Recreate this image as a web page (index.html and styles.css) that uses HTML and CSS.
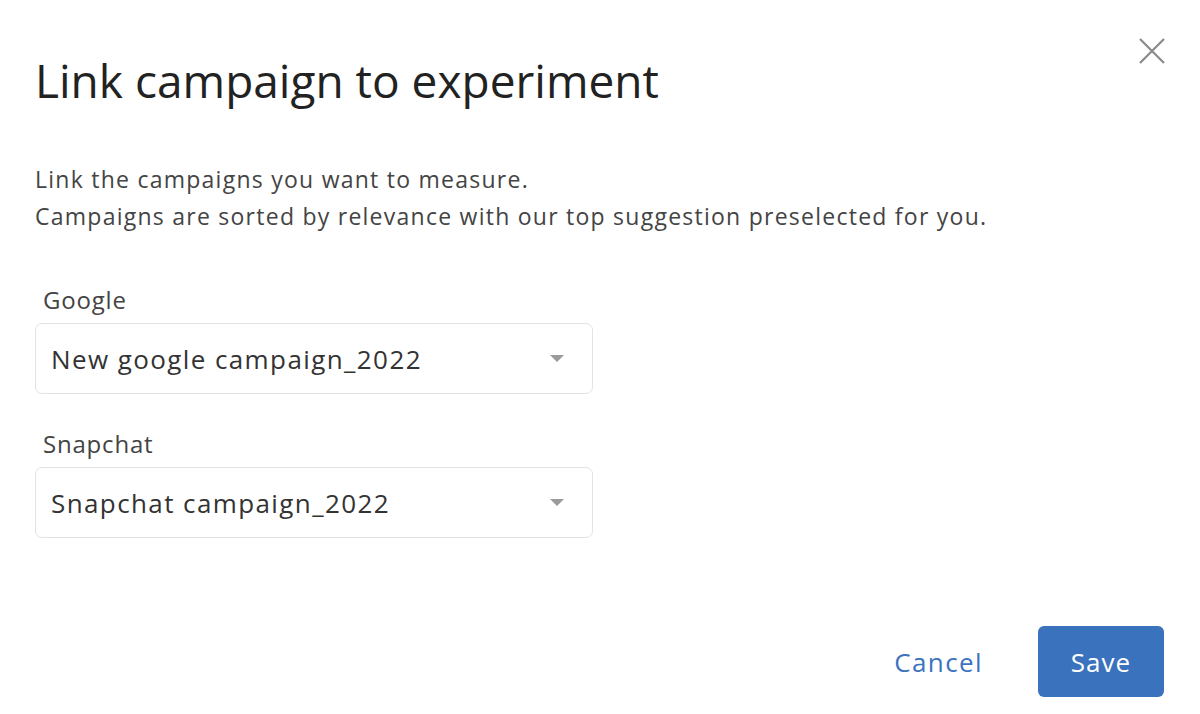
FILE: index.html
```html
<!DOCTYPE html>
<html lang="en">
<head>
<meta charset="utf-8">
<title>Link campaign to experiment</title>
<link rel="stylesheet" href="styles.css">
</head>
<body>
<div class="modal">
  <button class="close" aria-label="Close">
    <svg width="26" height="26" viewBox="0 0 26 26"><path d="M1 1 L25 25 M25 1 L1 25" stroke="#8a8a8a" stroke-width="2.2" fill="none"/></svg>
  </button>
  <h1 class="title">Link campaign to experiment</h1>
  <div class="desc">
    <p>Link the campaigns you want to measure.</p>
    <p>Campaigns are sorted by relevance with our top suggestion preselected for you.</p>
  </div>
  <div class="field">
    <label class="label">Google</label>
    <div class="select">
      <span class="value">New google campaign_2022</span>
      <span class="caret"></span>
    </div>
  </div>
  <div class="field">
    <label class="label">Snapchat</label>
    <div class="select">
      <span class="value">Snapchat campaign_2022</span>
      <span class="caret"></span>
    </div>
  </div>
  <div class="actions">
    <button class="cancel">Cancel</button>
    <button class="save">Save</button>
  </div>
</div>
</body>
</html>
```
FILE: styles.css
```css
* { box-sizing: border-box; }
html, body { margin: 0; padding: 0; background: #fff; }
body {
  font-family: "Open Sans", Lato, Arial, sans-serif;
  color: #2b2b2b;
  width: 1200px;
  height: 714px;
  overflow: hidden;
}
.modal {
  position: relative;
  padding: 50px 36px 0 35px;
  height: 714px;
}
.close {
  position: absolute;
  top: 38px;
  right: 35px;
  width: 26px;
  height: 26px;
  padding: 0;
  border: 0;
  background: none;
  display: block;
}
.close svg { display: block; }
.title {
  margin: 0;
  font-size: 46px;
  font-weight: 400;
  line-height: 60px;
  color: #222;
}
.desc {
  margin-top: 51px;
  font-size: 23px;
  line-height: 37px;
  letter-spacing: 1.25px;
  color: #444;
}
.desc p { margin: 0; }
.field { margin-top: 50px; width: 558px; }
.field + .field { margin-top: 35px; }
.label {
  display: block;
  margin-left: 8px;
  font-size: 24px;
  line-height: 30px;
  letter-spacing: 0.8px;
  color: #444;
  margin-bottom: 8px;
}
.select {
  height: 71px;
  border: 1.5px solid #e3e3e3;
  border-radius: 7px;
  display: flex;
  align-items: center;
  justify-content: space-between;
  padding: 0 28px 0 15px;
}
.value {
  font-size: 26px;
  letter-spacing: 1.4px;
  color: #333;
}
.caret {
  width: 0; height: 0;
  border-left: 7px solid transparent;
  border-right: 7px solid transparent;
  border-top: 7px solid #9a9a9a;
}
.actions {
  margin-top: 88px;
  display: flex;
  justify-content: flex-end;
  align-items: center;
  gap: 55px;
}
.cancel {
  background: none;
  border: 0;
  padding: 0;
  font-family: inherit;
  font-size: 26px;
  letter-spacing: 1.4px;
  color: #3b73bf;
}
.save {
  width: 126px;
  height: 71px;
  background: #3a72be;
  border: 0;
  border-radius: 6px;
  color: #fff;
  font-family: inherit;
  font-size: 26px;
  letter-spacing: 1px;
}
```
